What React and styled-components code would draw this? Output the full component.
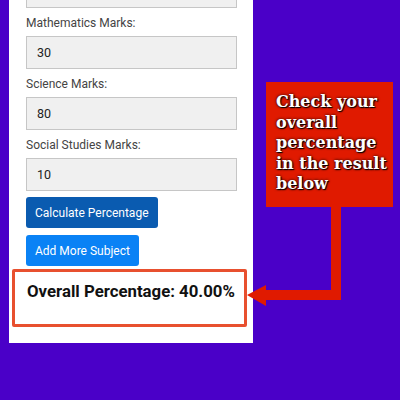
import React from 'react'
import styled, { createGlobalStyle } from 'styled-components'

const subjects = [
  { label: 'Mathematics Marks:', value: '30' },
  { label: 'Science Marks:', value: '80' },
  { label: 'Social Studies Marks:', value: '10' },
]

function App () {
  return (
    <Page>
      <GlobalStyle />
      <Panel>
        <CutInput readOnly value="" />
        {subjects.map(s => (
          <Field key={s.label}>
            <Label>{s.label}</Label>
            <Input readOnly value={s.value} />
          </Field>
        ))}
        <Button $dark>Calculate Percentage</Button>
        <Button>Add More Subject</Button>
        <Result>Overall Percentage: 40.00%</Result>
      </Panel>
      <Aside>
        <Callout>Check your overall percentage in the result below</Callout>
      </Aside>
      <Arrow width="400" height="400" viewBox="0 0 400 400">
        <rect x="331" y="206" width="10" height="94" fill="#e01a00" />
        <rect x="262" y="290" width="79" height="10" fill="#e01a00" />
        <polygon points="247,295 266,285 266,306" fill="#e01a00" />
      </Arrow>
    </Page>
  )
}

const GlobalStyle = createGlobalStyle`
  body {
    margin: 0;
    background: #4a00c8;
    font-family: Roboto, "Liberation Sans", sans-serif;
  }
`;
const Page = styled.div`
  position: relative;
  width: 400px;
  height: 400px;
  display: flex;
  align-items: flex-start;
  overflow: hidden;
`;
const Panel = styled.section`
  margin-left: 9px;
  width: 244px;
  height: 343px;
  box-sizing: border-box;
  background: #fff;
  padding: 0 16px 0 17px;
  display: flex;
  flex-direction: column;
  align-items: flex-start;
`;
const Field = styled.div`
  align-self: stretch;
  display: flex;
  flex-direction: column;
`;
const Label = styled.label`
  display: block;
  margin: 6px 0 4px;
  font-size: 12px;
  line-height: 18px;
  color: #444;
`;
const Input = styled.input`
  box-sizing: border-box;
  height: 33px;
  width: 100%;
  border: 1px solid #c6c6c6;
  background: #f0f0f0;
  padding: 0 10px;
  font-family: Roboto, "Liberation Sans", sans-serif;
  font-size: 12.5px;
  color: #222;
  outline: none;
`;
const CutInput = styled(Input)`
  margin-top: -25px;
  align-self: stretch;
`;
const Button = styled.button`
  height: 31px;
  margin-top: ${p => (p.$dark ? '6px' : '7px')};
  padding: 0 9px;
  border: none;
  border-radius: 3px;
  background: ${p => (p.$dark ? '#0a5bb0' : '#0a82f5')};
  color: #fff;
  font-family: Roboto, "Liberation Sans", sans-serif;
  font-size: 12px;
`;
const Result = styled.div`
  box-sizing: border-box;
  margin: 3px 0 0 -14px;
  width: 235px;
  height: 58px;
  border: 3px solid #e8502f;
  border-radius: 2px;
  padding: 9px 0 0 12px;
  font-size: 16.8px;
  font-weight: 700;
  color: #111;
`;
const Aside = styled.aside`
  margin-left: 13px;
  padding-top: 82px;
`;
const Callout = styled.div`
  box-sizing: border-box;
  width: 127px;
  height: 125px;
  background: #e01a00;
  padding: 10px 6px 0 10px;
  font-family: "DejaVu Serif", "Liberation Serif", serif;
  font-weight: 700;
  font-size: 16px;
  line-height: 20.5px;
  color: #fff;
  text-shadow: 0 0 3px #000, 1px 1px 1px #000;
`;
const Arrow = styled.svg`
  position: absolute;
  left: 0;
  top: 0;
  pointer-events: none;
`;

export default App;
